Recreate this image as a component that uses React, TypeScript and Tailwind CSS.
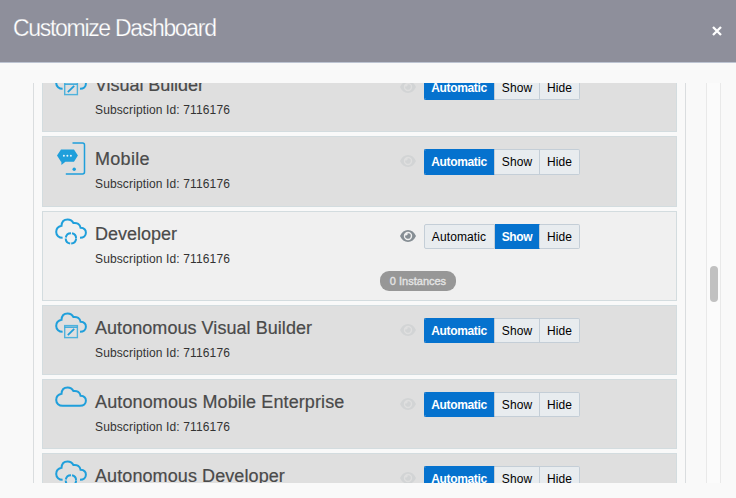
import React from "react";

type IconKind = "builder" | "mobile" | "developer" | "cloud";
type Choice = "Automatic" | "Show" | "Hide";

const CLOUD_TOP =
  "M7.6 19.8C4 19.8 1.2 17.3 1.2 14C1.2 10.8 3.5 8.4 6.5 7.8C6.7 4 9 1.4 12.6 1.4C15.2 1.4 17.3 2.8 18.4 5C22.1 4.5 25 6.4 25.6 9.8C28.7 10 30.9 12 30.9 14.8C30.9 17.7 28.6 19.8 25 19.8";

function ServiceIcon({ kind }: { kind: IconKind }) {
  if (kind === "mobile") {
    return (
      <svg width="32" height="34" viewBox="0 0 32 34" fill="none">
        <path d="M17.5 1H27.6Q29.5 1 29.5 2.9V30.1Q29.5 32 27.6 32H10.8" stroke="#1f9fdb" strokeWidth="1.5" />
        <path d="M6 7.4H19L22.9 13.6L19 19.8H10.4L6.4 23V19.8H6L2 13.6Z" fill="#1f9fdb" />
        <circle cx="8.9" cy="13.8" r="1" fill="#e6f4fb" />
        <circle cx="12.4" cy="13.8" r="1" fill="#e6f4fb" />
        <circle cx="15.9" cy="13.8" r="1" fill="#e6f4fb" />
        <circle cx="19.2" cy="27.3" r="1.7" fill="#1f9fdb" />
      </svg>
    );
  }
  return (
    <svg width="32" height="28" viewBox="0 0 32 28" fill="none" stroke="#1f9fdb" strokeWidth="2">
      <path d={kind === "cloud" ? CLOUD_TOP + "H7.6" : CLOUD_TOP} />
      {kind === "developer" && (
        <circle cx="15.9" cy="20.4" r="5.2" strokeDasharray="7.1 1.068" strokeDashoffset="-0.534" strokeWidth="2" />
      )}
      {kind === "builder" && (
        <g stroke="#4fb2dc" strokeWidth="1.4">
          <rect x="9.7" y="13.6" width="12.7" height="12" />
          <path d="M9.7 15.2H22.4" stroke="#2ea5db" strokeWidth="1.3" />
          <path d="M12.8 23.2L19.2 16.8" stroke="#1f9fdb" strokeWidth="1.8" />
        </g>
      )}
    </svg>
  );
}

function Eye({ active }: { active: boolean }) {
  return (
    <svg width="16" height="12" viewBox="0 0 16 12" className={active ? "text-[#868e94]" : "text-[#d2d4d5]"}>
      <path
        fill="currentColor"
        fillRule="evenodd"
        d="M0 6C1.7 2.3 4.5 0 8 0S14.3 2.3 16 6C14.3 9.7 11.5 12 8 12S1.7 9.7 0 6ZM8 1.8A4.2 4.2 0 1 0 8 10.2A4.2 4.2 0 1 0 8 1.8Z"
      />
      <path fill="currentColor" d="M8 3.2A2.8 2.8 0 1 1 5.3 5.2A1.6 1.6 0 0 0 7.6 3.2Z" />
    </svg>
  );
}

const CHOICES: { label: Choice; width: string; edge: string }[] = [
  { label: "Automatic", width: "w-[71px] pr-px", edge: "rounded-l-xs border-l" },
  { label: "Show", width: "w-[45px]", edge: "" },
  { label: "Hide", width: "w-[40px]", edge: "rounded-r-xs" },
];

function Toggle({ value, height }: { value: Choice; height: string }) {
  return (
    <div className={`flex w-[156px] text-xs ${height}`}>
      {CHOICES.map(({ label, width, edge }) => (
        <button
          key={label}
          className={`${width} ${edge} flex items-center justify-center border-y border-r border-r-[#c4ced7] ${
            label === value
              ? "border-y-[#0572ce] border-l-[#0572ce] bg-[#0572ce] bg-clip-padding font-bold tracking-[-0.35px] text-white"
              : "border-y-[#c4ced7] border-l-[#c4ced7] bg-[#e8ecef] tracking-[0.1px] text-black"
          }`}
        >
          {label}
        </button>
      ))}
    </div>
  );
}

interface Service {
  name: string;
  icon: IconKind;
  value: Choice;
  height: string;
  toggleHeight: string;
  tracking: string;
  badge?: string;
}

const SERVICES: Service[] = [
  { name: "Visual Builder", icon: "builder", value: "Automatic", height: "h-[70px]", toggleHeight: "h-[25px]", tracking: "tracking-[-0.06px]" },
  { name: "Mobile", icon: "mobile", value: "Automatic", height: "h-[71px]", toggleHeight: "h-[26px]", tracking: "tracking-[0.3px]" },
  { name: "Developer", icon: "developer", value: "Show", height: "h-[90px]", toggleHeight: "h-[25px]", tracking: "tracking-normal", badge: "0 Instances" },
  { name: "Autonomous Visual Builder", icon: "builder", value: "Automatic", height: "h-[70px]", toggleHeight: "h-[25px]", tracking: "tracking-[0.05px]" },
  { name: "Autonomous Mobile Enterprise", icon: "cloud", value: "Automatic", height: "h-[70px]", toggleHeight: "h-[25px]", tracking: "tracking-[0.12px]" },
  { name: "Autonomous Developer", icon: "developer", value: "Automatic", height: "h-[70px]", toggleHeight: "h-[25px]", tracking: "tracking-[0.09px]" },
];

function ServiceCard({ service }: { service: Service }) {
  const active = service.value === "Show";
  return (
    <div
      className={`${service.height} shrink-0 border border-[#d3dcdf] ${active ? "bg-[#f0f0f0]" : "bg-[#dfdfdf]"}`}
    >
      <div className="flex h-[55px]">
        <div className={`ml-3 w-10 ${service.icon === "mobile" ? "pt-[5px]" : "pt-[6px]"}`}>
          <ServiceIcon kind={service.icon} />
        </div>
        <div className="w-[305px] pt-[10px]">
          <h2
            className={`${service.tracking} text-[18px] leading-6 text-[#4a4a4a] [-webkit-text-stroke:0.2px_#4a4a4a]`}
          >
            {service.name}
          </h2>
          <p className="mt-[5px] text-xs leading-4 tracking-[0.13px] text-[#333]">Subscription Id: 7116176</p>
        </div>
        <div className="w-6 pt-[18px]">
          <Eye active={active} />
        </div>
        <div className="pt-3">
          <Toggle value={service.value} height={service.toggleHeight} />
        </div>
      </div>
      {service.badge && (
        <div className="ml-[337px] mt-[4px] flex h-5 w-[76px] items-center justify-center rounded-[9px] bg-[#979797] text-[11px] text-[#e4e4e4] [-webkit-text-stroke:0.35px_#e4e4e4]">
          {service.badge}
        </div>
      )}
    </div>
  );
}

export default function App() {
  return (
    <div className="flex h-[498px] w-[736px] flex-col overflow-hidden bg-[#f9f9f9] font-['Liberation_Sans',Arial,sans-serif]">
      <header className="flex h-[63px] shrink-0 items-center justify-between border-b border-[#bdc4d2] bg-[#8e8f9b] pl-[13px] pr-[14px]">
        <h1 className="mt-[-6px] text-[23px] leading-8 tracking-[-1.31px] text-white [-webkit-text-stroke:0.25px_#8e8f9b]">
          Customize Dashboard
        </h1>
        <svg width="10" height="10" viewBox="0 0 10 10" className="text-white">
          <path d="M1 1L9 9M9 1L1 9" stroke="currentColor" strokeWidth="2.3" />
        </svg>
      </header>
      <div className="mt-5 flex h-[400px] shrink-0 overflow-hidden pl-[33px]">
        <main className="h-full w-[653px] overflow-hidden border-x border-[#dadddf] px-2">
          <div className="-mt-[21px] flex flex-col gap-1">
            {SERVICES.map((service) => (
              <ServiceCard key={service.name} service={service} />
            ))}
          </div>
        </main>
        <div className="ml-5 flex h-full w-[15px] justify-center border-x border-[#e9e9e9] bg-[#fbfbfb] pt-[183px]">
          <div className="ml-px h-9 w-2 rounded-full bg-[#c1c1c1]" />
        </div>
      </div>
    </div>
  );
}
